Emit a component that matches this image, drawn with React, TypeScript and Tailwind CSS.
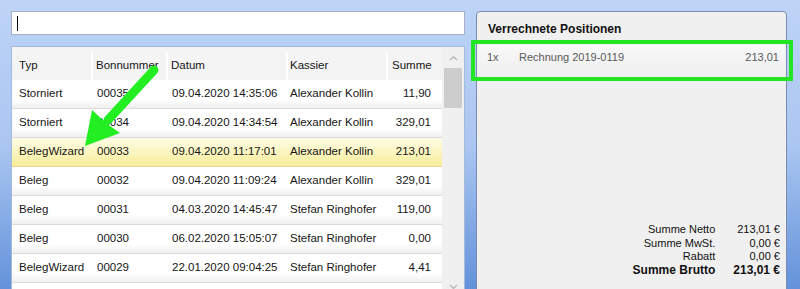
import React from "react";

type Row = { typ: string; bon: string; datum: string; kassier: string; summe: string; sel?: boolean };

const rows: Row[] = [
  { typ: "Storniert", bon: "00035", datum: "09.04.2020 14:35:06", kassier: "Alexander Kollin", summe: "11,90" },
  { typ: "Storniert", bon: "00034", datum: "09.04.2020 14:34:54", kassier: "Alexander Kollin", summe: "329,01" },
  { typ: "BelegWizard", bon: "00033", datum: "09.04.2020 11:17:01", kassier: "Alexander Kollin", summe: "213,01", sel: true },
  { typ: "Beleg", bon: "00032", datum: "09.04.2020 11:09:24", kassier: "Alexander Kollin", summe: "329,01" },
  { typ: "Beleg", bon: "00031", datum: "04.03.2020 14:45:47", kassier: "Stefan Ringhofer", summe: "119,00" },
  { typ: "Beleg", bon: "00030", datum: "06.02.2020 15:05:07", kassier: "Stefan Ringhofer", summe: "0,00" },
  { typ: "BelegWizard", bon: "00029", datum: "22.01.2020 09:04:25", kassier: "Stefan Ringhofer", summe: "4,41" },
];

function TableRow({ r }: { r: Row }) {
  return (
    <div
      className={
        "flex shrink-0 h-[29px] items-center text-[11.5px] text-[#161616] border-b " +
        (r.sel
          ? "bg-gradient-to-b from-[#fffde6] to-[#f8ec98] border-[#e3d68c]"
          : "bg-gradient-to-b from-white from-70% to-[#efefef] border-[#dcdcdc]")
      }
    >
      <div className="w-[81px] pl-[7px] whitespace-nowrap">{r.typ}</div>
      <div className="w-[75px] pl-[4px] whitespace-nowrap">{r.bon}</div>
      <div className="w-[120px] pl-[4px] whitespace-nowrap">{r.datum}</div>
      <div className="w-[100px] pl-[2px] whitespace-nowrap">{r.kassier}</div>
      <div className="w-[54px] pr-[11px] text-right whitespace-nowrap">{r.summe}</div>
    </div>
  );
}

export default function App() {
  return (
    <div className="relative w-[800px] h-[289px] overflow-hidden bg-gradient-to-b from-[#bed4f7] via-[#abc6f1] to-[#6392da] flex items-start gap-[11px] pt-[11px] pl-[11px] font-['Liberation_Sans',Arial,sans-serif]">
      {/* Left column */}
      <div className="w-[454px] flex flex-col shrink-0">
        <div className="shrink-0 h-[24px] border border-[#a7b1c0] bg-white flex items-center">
          <div className="ml-[5px] w-px h-[15px] bg-black" />
        </div>
        <div className="shrink-0 mt-[11px] h-[252px] border border-[#a3badb] bg-white flex overflow-hidden">
          <div className="w-[430px] flex flex-col">
            <div className="shrink-0 flex h-[33px] bg-[#f4f4f4] text-[11.5px] text-[#161616] pt-[5px] items-center">
              <div className="w-[81px] h-full flex items-center pl-[7px] border-r-2 border-white">Typ</div>
              <div className="w-[75px] h-full flex items-center pl-[3px] border-r-2 border-white">Bonnummer</div>
              <div className="w-[120px] h-full flex items-center pl-[3px] border-r-2 border-white">Datum</div>
              <div className="w-[100px] h-full flex items-center pl-[2px] border-r-2 border-white">Kassier</div>
              <div className="w-[54px] h-full flex items-center pl-[4px]">Summe</div>
            </div>
            {rows.map((r, i) => (
              <TableRow key={i} r={r} />
            ))}
            <div className="shrink-0 h-[29px] bg-white" />
          </div>
          <div className="w-[22px] bg-[#f0f0f0] flex flex-col items-center">
            <div className="shrink-0 h-[21px] flex items-center justify-center">
              <svg width="9" height="6" viewBox="0 0 9 6">
                <path d="M1 5 L4.5 1.5 L8 5" fill="none" stroke="#b4b4b4" strokeWidth="1.2" />
              </svg>
            </div>
            <div className="shrink-0 w-[18px] h-[40px] bg-[#cdcdcd]" />
            <div className="flex-1" />
            <div className="shrink-0 h-[21px] flex items-center justify-center">
              <svg width="9" height="6" viewBox="0 0 9 6">
                <path d="M1 1 L4.5 4.5 L8 1" fill="none" stroke="#b4b4b4" strokeWidth="1.2" />
              </svg>
            </div>
          </div>
        </div>
      </div>

      {/* Right panel */}
      <div className="relative w-[311px] h-[290px] shrink-0 border border-[#7b8baf] rounded-t-[4px] bg-[#f0f0f0] flex flex-col">
        <div className="shrink-0 pt-[9px] pl-[11px] text-[12px] font-bold text-[#111] leading-[16px]">Verrechnete Positionen</div>
        <div className="shrink-0 mt-[8px] h-[21px] mx-[1px] bg-gradient-to-b from-[#f9f9f9] to-[#f1f1f1] flex items-start pt-[6px] text-[11px] leading-[13px] text-[#5a5a5a]">
          <div className="w-[41px] pl-[9px]">1x</div>
          <div className="flex-1">Rechnung 2019-0119</div>
          <div className="pr-[6px]">213,01</div>
        </div>
        <div className="shrink-0 mt-[157px] pr-[6px] flex justify-end">
          <div className="grid grid-cols-[auto_auto] gap-x-[18px] text-[11px] leading-[13.5px] text-[#111]">
            <div className="text-right">Summe Netto</div>
            <div className="text-right">213,01 €</div>
            <div className="text-right">Summe MwSt.</div>
            <div className="text-right">0,00 €</div>
            <div className="text-right">Rabatt</div>
            <div className="text-right">0,00 €</div>
            <div className="text-right font-bold text-[12px]">Summe Brutto</div>
            <div className="text-right font-bold text-[12px]">213,01 €</div>
          </div>
        </div>
        {/* green highlight box */}
        <div className="absolute left-[-6px] top-[28px] w-[322px] h-[41px] border-4 border-[#22e622] pointer-events-none" />
      </div>

      {/* green arrow annotation */}
      <svg className="absolute left-0 top-0 pointer-events-none" width="800" height="289" viewBox="0 0 800 289">
        <line x1="154" y1="70" x2="108" y2="120" stroke="#22ee22" strokeWidth="9" strokeLinecap="round" />
        <polygon points="85,146 92,110 106,123 120,133" fill="#22ee22" />
      </svg>
    </div>
  );
}
